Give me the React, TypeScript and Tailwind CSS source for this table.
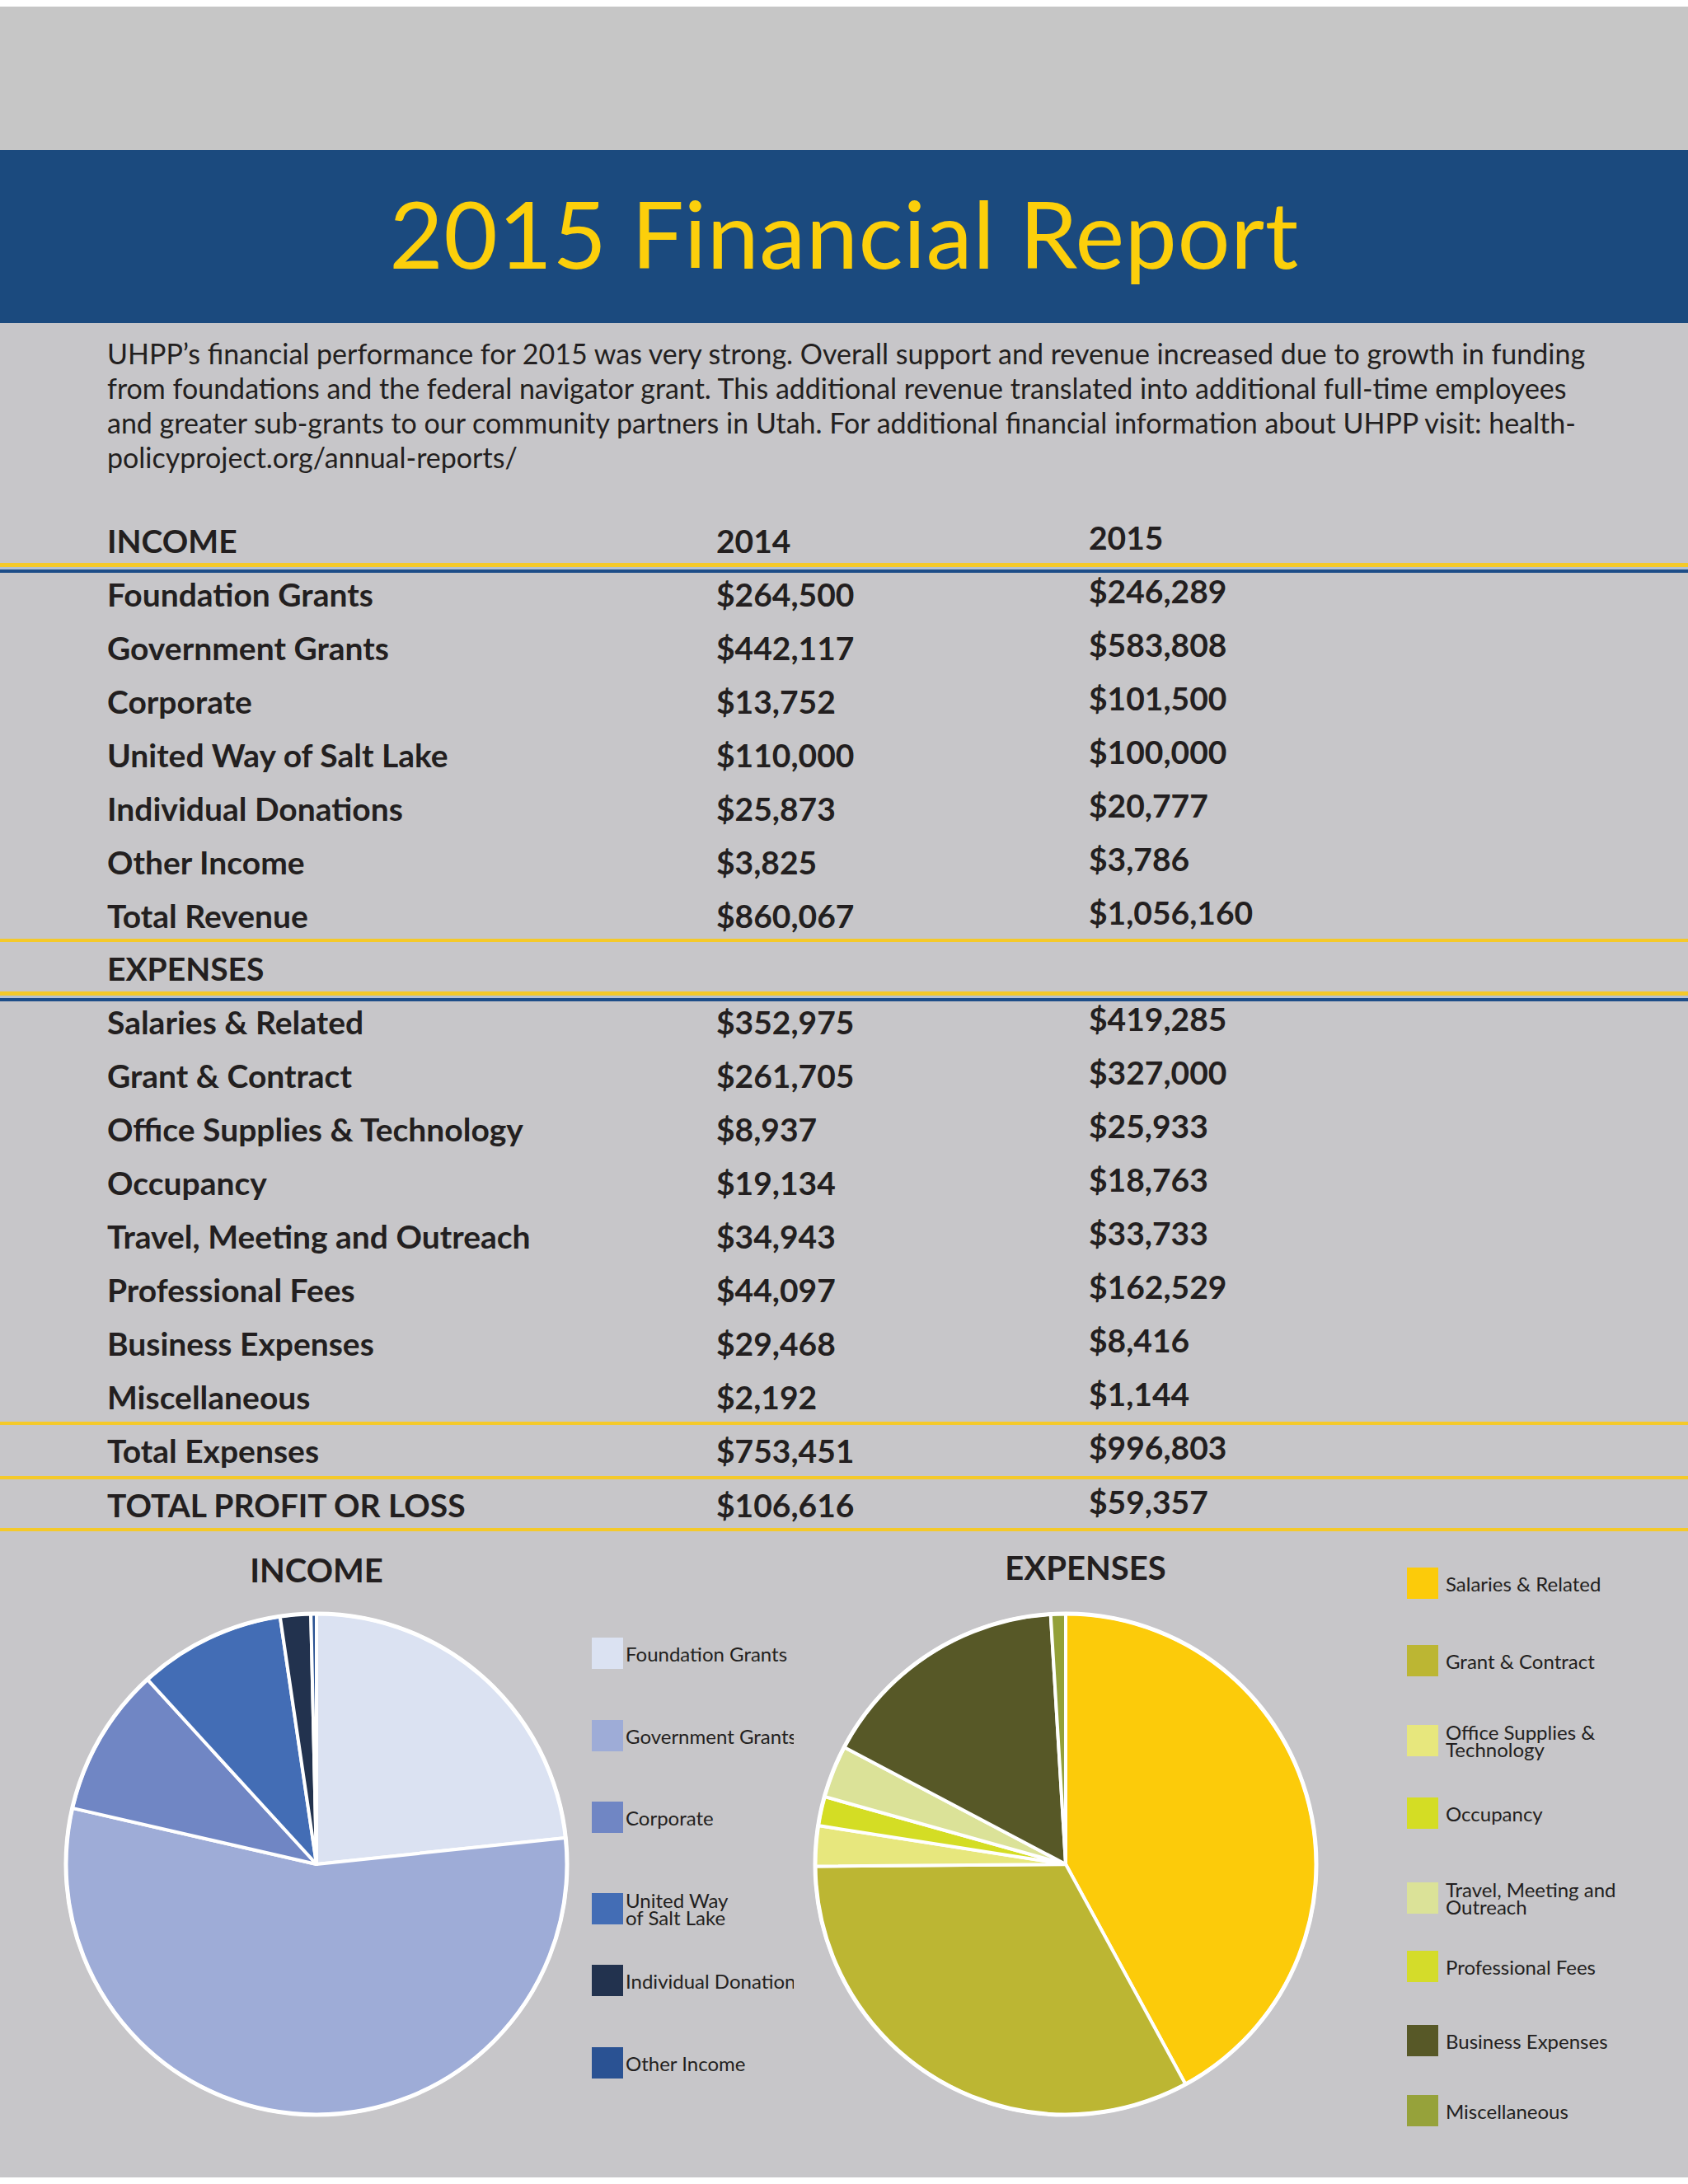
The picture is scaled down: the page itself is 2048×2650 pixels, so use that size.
import React from 'react';

type Row = { label: string; a: string; b: string; h: string; pt: string };
type Slice = { v: number; c: string };
type LegendItem = { label: string[]; color: string; mt: string };

const intro = [
  'UHPP’s financial performance for 2015 was very strong. Overall support and revenue increased due to growth in funding',
  'from foundations and the federal navigator grant. This additional revenue translated into additional full-time employees',
  'and greater sub-grants to our community partners in Utah. For additional financial information about UHPP visit: health-',
  'policyproject.org/annual-reports/',
];

const incomeRows: Row[] = [
  { label: 'Foundation Grants', a: '$264,500', b: '$246,289', h: 'h-[65px]', pt: 'pt-[7px]' },
  { label: 'Government Grants', a: '$442,117', b: '$583,808', h: 'h-[65px]', pt: 'pt-[7px]' },
  { label: 'Corporate', a: '$13,752', b: '$101,500', h: 'h-[65px]', pt: 'pt-[7px]' },
  { label: 'United Way of Salt Lake', a: '$110,000', b: '$100,000', h: 'h-[65px]', pt: 'pt-[7px]' },
  { label: 'Individual Donations', a: '$25,873', b: '$20,777', h: 'h-[65px]', pt: 'pt-[7px]' },
  { label: 'Other Income', a: '$3,825', b: '$3,786', h: 'h-[65px]', pt: 'pt-[7px]' },
  { label: 'Total Revenue', a: '$860,067', b: '$1,056,160', h: 'h-[54px]', pt: 'pt-[7px]' },
];

const expenseRows: Row[] = [
  { label: 'Salaries & Related', a: '$352,975', b: '$419,285', h: 'h-[65px]', pt: 'pt-[6px]' },
  { label: 'Grant & Contract', a: '$261,705', b: '$327,000', h: 'h-[65px]', pt: 'pt-[6px]' },
  { label: 'Office Supplies & Technology', a: '$8,937', b: '$25,933', h: 'h-[65px]', pt: 'pt-[6px]' },
  { label: 'Occupancy', a: '$19,134', b: '$18,763', h: 'h-[65px]', pt: 'pt-[6px]' },
  { label: 'Travel, Meeting and Outreach', a: '$34,943', b: '$33,733', h: 'h-[65px]', pt: 'pt-[6px]' },
  { label: 'Professional Fees', a: '$44,097', b: '$162,529', h: 'h-[65px]', pt: 'pt-[6px]' },
  { label: 'Business Expenses', a: '$29,468', b: '$8,416', h: 'h-[65px]', pt: 'pt-[6px]' },
  { label: 'Miscellaneous', a: '$2,192', b: '$1,144', h: 'h-[55px]', pt: 'pt-[6px]' },
];

const incomeSlices: Slice[] = [
  { v: 246289, c: '#dbe2f2' },
  { v: 583808, c: '#9eacd7' },
  { v: 101500, c: '#7086c4' },
  { v: 100000, c: '#436db5' },
  { v: 20777, c: '#22324e' },
  { v: 3786, c: '#2a5293' },
];

// order/colours as drawn in the original chart
const expenseSlices: Slice[] = [
  { v: 419285, c: '#fccb0a' },
  { v: 327000, c: '#bcb633' },
  { v: 25933, c: '#e7e77d' },
  { v: 18763, c: '#d4dd24' },
  { v: 33733, c: '#dbe298' },
  { v: 162529, c: '#575827' },
  { v: 9560, c: '#93a03a' },
];

const incomeLegend: LegendItem[] = [
  { label: ['Foundation Grants'], color: 'bg-[#dbe2f2]', mt: 'mt-[129px]' },
  { label: ['Government Grants'], color: 'bg-[#9eacd7]', mt: 'mt-[62px]' },
  { label: ['Corporate'], color: 'bg-[#7086c4]', mt: 'mt-[61px]' },
  { label: ['United Way', 'of Salt Lake'], color: 'bg-[#436db5]', mt: 'mt-[73px]' },
  { label: ['Individual Donations'], color: 'bg-[#22324e]', mt: 'mt-[49px]' },
  { label: ['Other Income'], color: 'bg-[#2a5293]', mt: 'mt-[62px]' },
];

const expenseLegend: LegendItem[] = [
  { label: ['Salaries & Related'], color: 'bg-[#fccb0a]', mt: 'mt-[44px]' },
  { label: ['Grant & Contract'], color: 'bg-[#bcb633]', mt: 'mt-[56px]' },
  { label: ['Office Supplies &', 'Technology'], color: 'bg-[#e7e77d]', mt: 'mt-[59px]' },
  { label: ['Occupancy'], color: 'bg-[#d4dd24]', mt: 'mt-[50px]' },
  { label: ['Travel, Meeting and', 'Outreach'], color: 'bg-[#dbe298]', mt: 'mt-[65px]' },
  { label: ['Professional Fees'], color: 'bg-[#d4dc2a]', mt: 'mt-[45px]' },
  { label: ['Business Expenses'], color: 'bg-[#575827]', mt: 'mt-[52px]' },
  { label: ['Miscellaneous'], color: 'bg-[#96a23a]', mt: 'mt-[47px]' },
];

const TableRow = ({ label, a, b, h, pt }: Row) => (
  <div className={`flex ${h} ${pt} pl-[130px] text-[39px] font-bold leading-[38px]`}>
    <div className="w-[739px] whitespace-nowrap">{label}</div>
    <div className="w-[452px] whitespace-nowrap">{a}</div>
    <div className="-mt-[4px] whitespace-nowrap">{b}</div>
  </div>
);

const DoubleRule = () => (
  <div>
    <div className="h-[5px] bg-[#f4c92a]" />
    <div className="h-[3px] bg-[#b3c1d3]" />
    <div className="h-[4px] bg-[#1d4d88]" />
  </div>
);

const YellowRule = () => <div className="h-[4px] bg-[#f4c92a]" />;

const Pie = ({ slices }: { slices: Slice[] }) => {
  const total = slices.reduce((s, x) => s + x.v, 0);
  const cx = 310;
  const cy = 310;
  const r = 304;
  let acc = 0;
  return (
    <svg width="620" height="620" viewBox="0 0 620 620">
      {slices.map((s, i) => {
        const a0 = (acc / total) * 2 * Math.PI;
        acc += s.v;
        const a1 = (acc / total) * 2 * Math.PI;
        const x0 = cx + r * Math.sin(a0);
        const y0 = cy - r * Math.cos(a0);
        const x1 = cx + r * Math.sin(a1);
        const y1 = cy - r * Math.cos(a1);
        const large = a1 - a0 > Math.PI ? 1 : 0;
        return (
          <path
            key={i}
            d={`M${cx},${cy} L${x0},${y0} A${r},${r} 0 ${large} 1 ${x1},${y1} Z`}
            fill={s.c}
            stroke="#fff"
            strokeWidth={4}
            strokeLinejoin="round"
          />
        );
      })}
      <circle cx={cx} cy={cy} r={r} fill="none" stroke="#fff" strokeWidth={5} />
    </svg>
  );
};

const Legend = ({ items, gap, width, size }: { items: LegendItem[]; gap: string; width: string; size: string }) => (
  <div className={`flex flex-col ${width} overflow-hidden`}>
    {items.map((it) => (
      <div key={it.label.join(' ')} className={`flex h-[38px] items-center ${gap} ${it.mt}`}>
        <div className={`h-[38px] w-[38px] shrink-0 ${it.color}`} />
        <div className={`${size} leading-[21px] whitespace-nowrap text-[#231f20]`}>
          {it.label.map((l) => (
            <div key={l}>{l}</div>
          ))}
        </div>
      </div>
    ))}
  </div>
);

export default function App() {
  return (
    <div className="w-[2048px] h-[2650px] bg-white pt-[8px] pb-[8px] font-['Lato',sans-serif] text-[#231f20]">
      <div className="h-full bg-[#c7c6c9]">
        <div className="h-[174px] bg-[#c6c6c6]" />
        <div className="h-[210px] bg-[#1b4a7e] pt-[44px]">
          <h1 className="text-center text-[113px] leading-[113px] font-normal tracking-[0.5px] text-[#fccf0b] whitespace-nowrap">
            2015 Financial Report
          </h1>
        </div>

        <div className="pt-[16px] pl-[130px] text-[34px] leading-[42px]">
          {intro.map((line) => (
            <div key={line} className="whitespace-nowrap">
              {line}
            </div>
          ))}
        </div>

        <div className="mt-[48px]">
          <div className="flex h-[59px] pt-[13px] pl-[130px] text-[39px] font-bold leading-[38px]">
            <div className="w-[739px]">INCOME</div>
            <div className="w-[452px]">2014</div>
            <div className="-mt-[4px]">2015</div>
          </div>
          <DoubleRule />
          {incomeRows.map((r) => (
            <TableRow key={r.label} {...r} />
          ))}
          <YellowRule />
          <div className="h-[60px] pt-[13px] pl-[130px] text-[39px] font-bold leading-[38px]">EXPENSES</div>
          <DoubleRule />
          {expenseRows.map((r) => (
            <TableRow key={r.label} {...r} />
          ))}
          <YellowRule />
          <TableRow label="Total Expenses" a="$753,451" b="$996,803" h="h-[62px]" pt="pt-[12px]" />
          <YellowRule />
          <TableRow label="TOTAL PROFIT OR LOSS" a="$106,616" b="$59,357" h="h-[59px]" pt="pt-[12px]" />
          <YellowRule />
        </div>

        <div className="flex">
          <div className="ml-[74px] flex w-[620px] flex-col">
            <h2 className="pt-[27px] text-center text-[40px] font-bold leading-[40px]">INCOME</h2>
            <div className="mt-[27px]">
              <Pie slices={incomeSlices} />
            </div>
          </div>
          <div className="ml-[24px]">
            <Legend items={incomeLegend} gap="gap-[3px]" width="w-[245px]" size="text-[24px]" />
          </div>
          <div className="ml-[20px] flex w-[620px] flex-col">
            <h2 className="pt-[24px] pl-[48px] text-center text-[40px] font-bold leading-[40px]">EXPENSES</h2>
            <div className="mt-[30px]">
              <Pie slices={expenseSlices} />
            </div>
          </div>
          <div className="ml-[104px]">
            <Legend items={expenseLegend} gap="gap-[9px]" width="w-[320px]" size="text-[24px]" />
          </div>
        </div>
      </div>
    </div>
  );
}
